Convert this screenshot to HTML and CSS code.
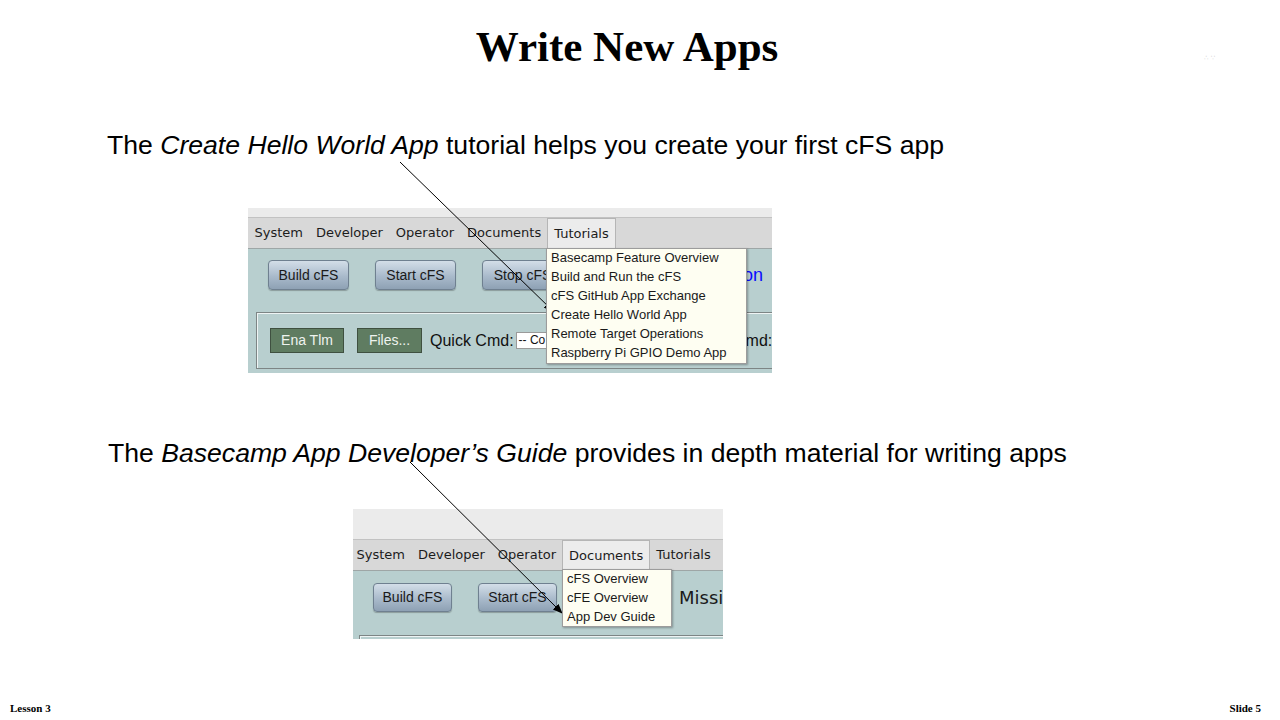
FILE: index.html
```html
<!DOCTYPE html>
<html lang="en">
<head>
<meta charset="utf-8">
<title>Write New Apps</title>
<link rel="stylesheet" href="styles.css">
</head>
<body>
<div class="slide">
  <h1 class="title">Write New Apps</h1>
  <span class="corner-mark">&#8756; &#8757;</span>

  <p class="lead lead-1">The <em>Create Hello World App</em> tutorial helps you create your first cFS app</p>

  <div class="shot shot-1">
    <div class="shot-top shot-top-thin"></div>
    <div class="menubar">
      <span class="menu-item">System</span>
      <span class="menu-item">Developer</span>
      <span class="menu-item">Operator</span>
      <span class="menu-item">Documents</span>
      <span class="menu-item menu-open">Tutorials</span>
    </div>
    <div class="shot-body">
      <div class="btn-row">
        <span class="btn">Build cFS</span>
        <span class="btn">Start cFS</span>
        <span class="btn">Stop cFS</span>
        <span class="mission-blue">on</span>
      </div>
      <div class="frame">
        <span class="btn-green btn-ena">Ena Tlm</span>
        <span class="btn-green btn-files">Files...</span>
        <span class="quick">Quick Cmd:</span>
        <span class="select">-- Co</span>
        <span class="quick quick-2">md:</span>
      </div>
    </div>
    <ul class="dropdown dropdown-1">
      <li>Basecamp Feature Overview</li>
      <li>Build and Run the cFS</li>
      <li>cFS GitHub App Exchange</li>
      <li>Create Hello World App</li>
      <li>Remote Target Operations</li>
      <li>Raspberry Pi GPIO Demo App</li>
    </ul>
  </div>

  <p class="lead lead-2">The <em>Basecamp App Developer’s Guide</em> provides in depth material for writing apps</p>

  <div class="shot shot-2">
    <div class="shot-top shot-top-tall"></div>
    <div class="menubar menubar-2">
      <span class="menu-item">System</span>
      <span class="menu-item">Developer</span>
      <span class="menu-item">Operator</span>
      <span class="menu-item menu-open">Documents</span>
      <span class="menu-item">Tutorials</span>
    </div>
    <div class="shot-body shot-body-2">
      <div class="btn-row">
        <span class="btn">Build cFS</span>
        <span class="btn">Start cFS</span>
        <span class="mission-dark">Missi</span>
      </div>
      <div class="frame frame-2"></div>
    </div>
    <ul class="dropdown dropdown-2">
      <li>cFS Overview</li>
      <li>cFE Overview</li>
      <li>App Dev Guide</li>
    </ul>
  </div>

  <footer class="footer">
    <span>Lesson 3</span>
    <span>Slide 5</span>
  </footer>

  <svg class="arrows" width="1280" height="720" viewBox="0 0 1280 720">
    <defs>
      <marker id="head" markerWidth="10" markerHeight="8" refX="9" refY="4" orient="auto" markerUnits="userSpaceOnUse">
        <path d="M0,0 L10,4 L0,8 Z" fill="#000"/>
      </marker>
    </defs>
    <line x1="400" y1="162" x2="553" y2="311" stroke="#000" stroke-width="1" marker-end="url(#head)"/>
    <line x1="410" y1="462" x2="562" y2="613" stroke="#000" stroke-width="1" marker-end="url(#head)"/>
  </svg>
</div>
</body>
</html>
```
FILE: styles.css
```css
* { box-sizing: border-box; }
html, body { margin: 0; padding: 0; background: #fff; }
.slide {
  position: relative;
  width: 1280px;
  height: 720px;
  overflow: hidden;
  display: flex;
  flex-direction: column;
  background: #fff;
}
.title {
  margin: 25px 26px 0 0;
  height: 43px;
  font-family: "Liberation Serif", "Times New Roman", serif;
  font-weight: bold;
  font-size: 43px;
  line-height: 43px;
  text-align: center;
  color: #000;
}
.corner-mark {
  position: absolute;
  left: 1204px;
  top: 54px;
  font-family: "DejaVu Sans", sans-serif;
  font-size: 7px;
  color: #cfcfcf;
}
.lead {
  margin: 0;
  height: 27px;
  font-family: "Liberation Sans", Arial, sans-serif;
  font-size: 26.6px;
  line-height: 27px;
  color: #000;
  white-space: nowrap;
}
.lead em { font-style: italic; }
.lead-1 { margin-top: 64px; padding-left: 107px; }
.lead-2 { margin-top: 67px; padding-left: 108px; }

.shot {
  position: relative;
  overflow: hidden;
  background: #b8cfcf;
}
.shot-1 { margin-top: 49px; margin-left: 248px; width: 524px; height: 165px; }
.shot-2 { margin-top: 42px; margin-left: 353px; width: 370px; height: 130px; }

.shot-top { background: #ebebeb; border-bottom: 1px solid #c2c2c2; }
.shot-top-thin { height: 10px; }
.shot-top-tall { height: 31px; }

.menubar {
  display: flex;
  height: 31px;
  background: #d8d8d8;
  border-bottom: 1px solid #9ea6a6;
  font-family: "DejaVu Sans", sans-serif;
  font-size: 13px;
  color: #1c1c1c;
}
.menubar-2 { margin-left: -3px; }
.menu-item {
  padding: 0 6.5px;
  line-height: 30px;
  white-space: nowrap;
}
.menu-open {
  background: #ececec;
  border: 1px solid #b5b5b5;
  border-bottom: none;
  line-height: 29px;
  height: 31px;
  padding: 0 6px;
  margin: 0 -0.5px;
  position: relative;
  z-index: 1;
}

.shot-body {
  font-family: "Liberation Sans", Arial, sans-serif;
  color: #111;
}
.btn-row {
  display: flex;
  align-items: center;
  gap: 26px;
  padding: 11px 0 0 20px;
  height: 41px;
}
.btn {
  flex: none;
  width: 81px;
  height: 30px;
  line-height: 28px;
  text-align: center;
  font-size: 14px;
  color: #1a1a1a;
  border: 1px solid #6f8090;
  border-radius: 4px;
  background: linear-gradient(#d3dee8, #a9bacb 55%, #8ea1b4);
  box-shadow: 0 1px 1px rgba(0,0,0,0.25);
}
.mission-blue {
  margin-left: 154px;
  font-size: 18px;
  color: #0a0aff;
  white-space: nowrap;
}
.mission-dark {
  margin-left: 96px;
  font-family: "DejaVu Sans", sans-serif;
  font-size: 18px;
  color: #1a1a1a;
  white-space: nowrap;
}
.frame {
  display: flex;
  align-items: center;
  margin: 22px 0 0 8px;
  height: 57px;
  width: 540px;
  border: 1px solid #7d8585;
  box-shadow: inset 1px 1px 0 #eef4f4;
  padding-left: 13px;
}
.btn-green {
  flex: none;
  height: 25px;
  line-height: 23px;
  text-align: center;
  font-size: 14px;
  color: #eef3ee;
  background: #5f7c61;
  border: 1px solid #3f5040;
}
.btn-ena { width: 74px; }
.btn-files { width: 65px; margin-left: 13px; }
.quick {
  margin-left: 8px;
  font-size: 16px;
  color: #111;
  white-space: nowrap;
}
.select {
  flex: none;
  margin-left: 2px;
  width: 31px;
  height: 17px;
  line-height: 15px;
  font-size: 12px;
  padding-left: 2px;
  background: #fff;
  border: 1px solid #9a9a9a;
  border-right: none;
  white-space: nowrap;
  overflow: hidden;
}
.quick-2 { margin-left: 199px; }
.shot-2 .btn { width: 79px; height: 29px; line-height: 27px; }
.frame-2 { margin-top: 23px; margin-left: 6px; height: 30px; }

.dropdown {
  position: absolute;
  margin: 0;
  padding: 0;
  list-style: none;
  background: #fefef2;
  border: 1px solid #9c9c9c;
  box-shadow: 1px 1px 2px rgba(0,0,0,0.3);
  font-family: "Liberation Sans", Arial, sans-serif;
  font-size: 13px;
  color: #1a1a1a;
  z-index: 2;
}
.dropdown li {
  height: 19px;
  line-height: 18px;
  padding-left: 4px;
  white-space: nowrap;
}
.dropdown-1 { left: 298px; top: 40px; width: 201px; height: 116px; }
.dropdown-2 { left: 209px; top: 60px; width: 110px; height: 58px; }

.footer {
  margin-top: 63px;
  display: flex;
  justify-content: space-between;
  padding: 0 19px 0 10px;
  font-family: "Liberation Serif", "Times New Roman", serif;
  font-weight: bold;
  font-size: 11px;
  line-height: 12px;
  color: #000;
}
.arrows {
  position: absolute;
  left: 0;
  top: 0;
  pointer-events: none;
}
```
